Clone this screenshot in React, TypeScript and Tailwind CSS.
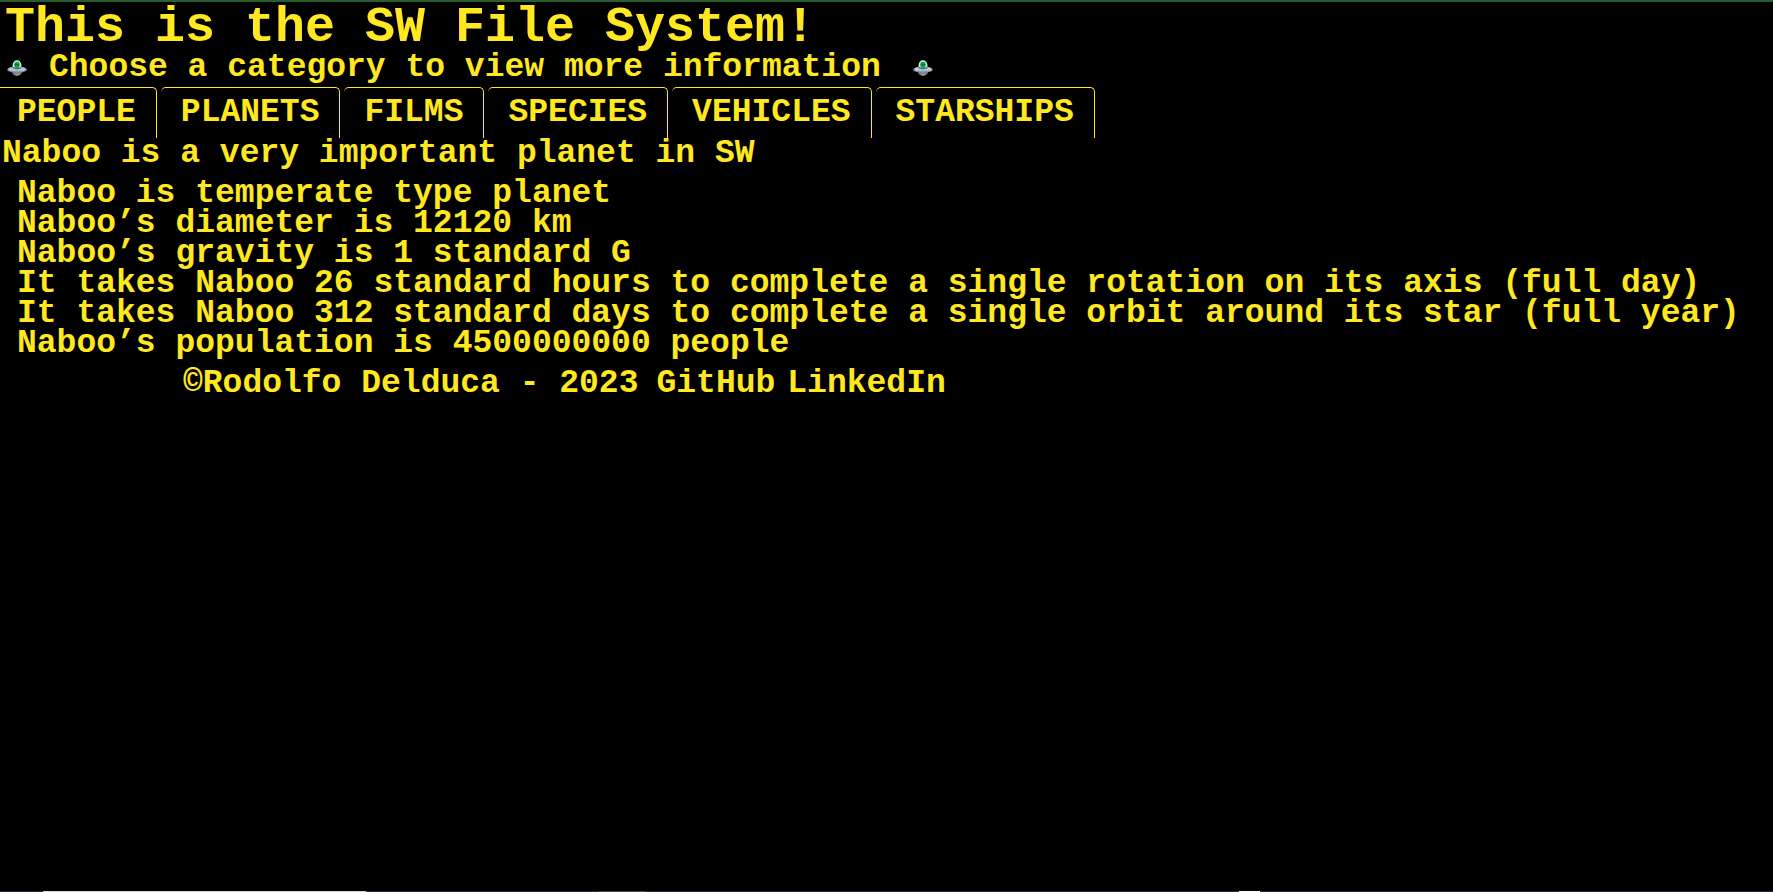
import React from "react";

const categories = ["PEOPLE", "PLANETS", "FILMS", "SPECIES", "VEHICLES", "STARSHIPS"];

const facts = [
  "Naboo is temperate type planet",
  "Naboo’s diameter is 12120 km",
  "Naboo’s gravity is 1 standard G",
  "It takes Naboo 26 standard hours to complete a single rotation on its axis (full day)",
  "It takes Naboo 312 standard days to complete a single orbit around its star (full year)",
  "Naboo’s population is 4500000000 people",
];

function Saucer() {
  return (
    <svg viewBox="0 0 20 16" className="h-4 w-5 shrink-0" aria-hidden="true">
      <path d="M4 11h12l-2 3.2Q10 17.5 6 14.2z" fill="#65696b" />
      <path d="M6.5 13.5h7l-1.5 1.4q-2 1-4 0z" fill="#9a9da0" />
      <ellipse cx="10" cy="9.7" rx="9.8" ry="3" fill="#8e969d" />
      <ellipse cx="10" cy="8.9" rx="8.6" ry="2.3" fill="#b9c2ca" />
      <path d="M5.6 8V5a4.4 4.7 0 0 1 8.8 0v3Q10 10.2 5.6 8z" fill="#c9eef5" />
      <path d="M5.6 6.8Q10 8.6 14.4 6.8V8.3Q10 10.4 5.6 8.3z" fill="#2f6f9d" />
      <ellipse cx="10" cy="4.8" rx="2.8" ry="3.1" fill="#17a32b" />
      <circle cx="9" cy="4.7" r="0.7" fill="#075313" />
      <circle cx="11.2" cy="4.7" r="0.7" fill="#075313" />
      <circle cx="3.4" cy="9.7" r="0.7" fill="#e1e6eb" />
      <circle cx="10" cy="11" r="0.8" fill="#5d9fd0" />
      <circle cx="16.6" cy="9.7" r="0.7" fill="#e1e6eb" />
    </svg>
  );
}

export default function App() {
  return (
    <div className="flex min-h-screen flex-col overflow-x-hidden border-t-2 border-[#265f2d] bg-black font-['Liberation_Mono',monospace] text-[33px] leading-[30px] font-bold text-[#ffe81f]">
      <header>
        <h1 className="px-[5px] pt-[6px] text-[50px] leading-[40px]">This is the SW File System!</h1>
        <div className="flex items-center gap-[22px] px-[7px] pt-[5px]">
          <Saucer />
          <h2 className="pr-[10px]">Choose a category to view more information</h2>
          <Saucer />
        </div>
      </header>

      <nav className="mt-1 flex gap-1">
        {categories.map((name) => (
          <button
            key={name}
            type="button"
            className="rounded-t-[5px] border-t border-r border-[#ffe81f] px-5 pt-[10px] pb-[10px] first:rounded-tl-none first:pl-[17px]"
          >
            {name}
          </button>
        ))}
      </nav>

      <main className="pt-px">
        <p className="pl-[2px]">Naboo is a very important planet in SW</p>
        <ul className="mt-[10px] pl-[17px]">
          {facts.map((fact) => (
            <li key={fact}>{fact}</li>
          ))}
        </ul>
      </main>

      <footer className="mt-[10px] flex gap-[18px] pl-[183px]">
        <span>©Rodolfo Delduca - 2023</span>
        <span className="flex gap-3">
          <a href="#github">GitHub</a>
          <a href="#linkedin">LinkedIn</a>
        </span>
      </footer>

      <div className="mt-auto flex h-px bg-[#252b33]" aria-hidden="true">
        <span className="ml-[43px] w-[323px] bg-[#d9d4d3]" />
        <span className="ml-[233px] w-[46px] bg-[#4c4c4c]" />
        <span className="ml-[594px] w-[21px] bg-white" />
      </div>
    </div>
  );
}
